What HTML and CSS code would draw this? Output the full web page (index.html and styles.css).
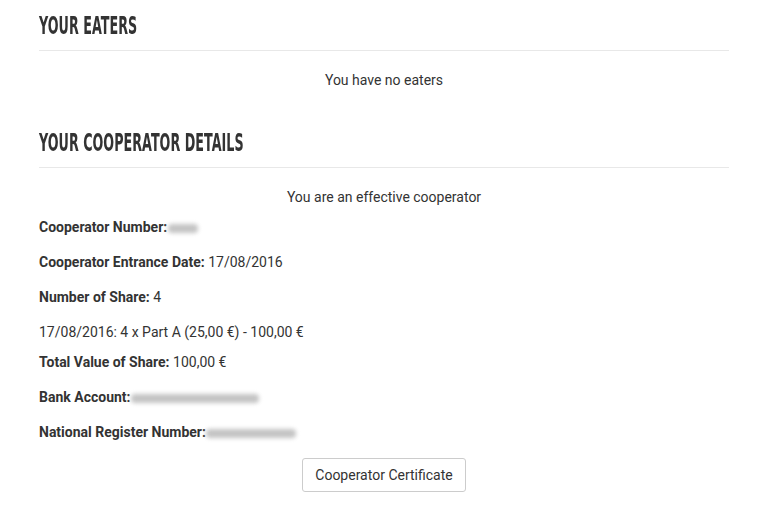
FILE: index.html
```html
<!DOCTYPE html>
<html>
<head>
<meta charset="utf-8">
<link rel="stylesheet" href="styles.css">
</head>
<body>
<div class="page">
  <div class="section-head"><h2>Your Eaters</h2></div>
  <p class="center first-p">You have no eaters</p>

  <div class="section-head second"><h2>Your Cooperator Details</h2></div>
  <p class="center first-p">You are an effective cooperator</p>

  <p class="row r1"><b>Cooperator Number:</b> <span class="blur w30"></span></p>
  <p class="row"><b>Cooperator Entrance Date:</b> 17/08/2016</p>
  <p class="row"><b>Number of Share:</b> 4</p>
  <p class="row">17/08/2016: 4 x Part A (25,00 €) - 100,00 €</p>
  <p class="row r-tight"><b>Total Value of Share:</b> 100,00 €</p>
  <p class="row"><b>Bank Account:</b> <span class="blur w128"></span></p>
  <p class="row"><b>National Register Number:</b> <span class="blur w90"></span></p>

  <div class="actions"><button class="btn">Cooperator Certificate</button></div>
</div>
</body>
</html>
```

FILE: styles.css
```css
html, body {
  margin: 0;
  padding: 0;
  background: #fff;
}
.page {
  padding: 0 39px;
  width: 690px;
  font-family: Roboto, "Liberation Sans", sans-serif;
  font-size: 14px;
  line-height: 20px;
  color: #333;
}
.section-head {
  height: 50px;
  border-bottom: 1px solid #e8e8e8;
  box-sizing: content-box;
}
.section-head.second {
  margin-top: 27px;
}
.section-head h2 {
  display: inline-block;
  margin: 0;
  padding-top: 11px;
  font-family: "DejaVu Sans", sans-serif;
  font-weight: bold;
  font-size: 24.5px;
  line-height: 30px;
  text-transform: uppercase;
  letter-spacing: 0;
  color: #333;
  white-space: nowrap;
  transform: scaleX(0.52);
  transform-origin: 0 0;
}
p {
  margin: 0;
}
.center {
  text-align: center;
}
.first-p {
  margin-top: 19px;
}
.row {
  margin-top: 15px;
}
.row.r1 {
  margin-top: 10px;
}
.row.r-tight {
  margin-top: 10px;
}
.row b {
  font-weight: bold;
  color: #333;
}
.blur {
  display: inline-block;
  height: 9px;
  vertical-align: middle;
  background: #c4c4c4;
  filter: blur(2px);
  border-radius: 4px;
  margin-left: -3px;
}
.w30 { width: 30px; }
.w128 { width: 128px; }
.w90 { width: 90px; }
.actions {
  margin-top: 16px;
  text-align: center;
}
.btn {
  font-family: Roboto, "Liberation Sans", sans-serif;
  font-size: 14px;
  line-height: 20px;
  color: #333;
  background: #fff;
  border: 1px solid #ccc;
  border-radius: 3px;
  padding: 6px 12px;
}
```
